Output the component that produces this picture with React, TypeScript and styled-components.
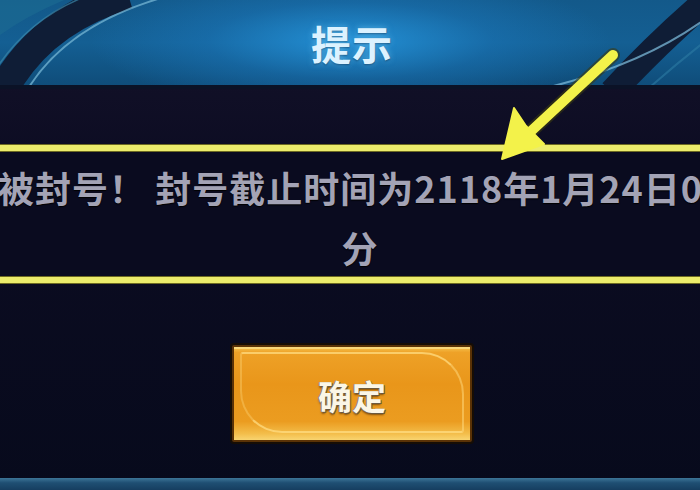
import React from "react";
import styled, { createGlobalStyle } from "styled-components";

const GlobalStyle = createGlobalStyle`
    html, body {
        margin: 0;
        padding: 0;
        background: #090a1d;
        overflow: hidden;
    }
`;

const Screen = styled.div`
    position: relative;
    width: 700px;
    height: 490px;
    display: flex;
    flex-direction: column;
    overflow: hidden;
    font-family: "Noto Sans CJK SC", "Noto Sans", sans-serif;
    background: linear-gradient(180deg, #15132b 0%, #0c0c22 35%, #070a1c 100%);
`;

const TitleBar = styled.header`
    position: relative;
    height: 85px;
    flex-shrink: 0;
    display: flex;
    align-items: center;
    justify-content: center;
    overflow: hidden;
    border-bottom: 4px solid #0b1226;
    background:
        radial-gradient(ellipse 260px 70px at 50% 48%, rgba(40, 160, 235, 0.75) 0%, rgba(30, 130, 205, 0.35) 55%, rgba(20, 90, 150, 0) 100%),
        linear-gradient(180deg, #13598a 0%, #145f93 50%, #0f4d7a 100%);
`;

const TitleArcs = styled.svg`
    position: absolute;
    inset: 0;
    pointer-events: none;
`;

const Title = styled.h1`
    position: relative;
    margin: 0 0 0 4px;
    font-size: 40px;
    font-weight: 700;
    letter-spacing: 1px;
    color: #dcf2ff;
    text-shadow: 0 0 6px rgba(120, 210, 255, 0.6), 0 1px 2px rgba(0, 40, 80, 0.8);
`;

const Notice = styled.section`
    margin-top: 56px;
    height: 120px;
    padding-top: 6px;
    box-sizing: content-box;
    border-top: 6px solid #ecec6c;
    border-bottom: 6px solid #ecec6c;
    box-shadow: 0 -1px 0 #6d6a22, 0 1px 0 #6d6a22, inset 0 1px 0 #6d6a22, inset 0 -1px 0 #6d6a22;
    background: #0a0b1f;
`;

const NoticeLine = styled.p<{ $centered?: boolean }>`
    margin: 0;
    height: 60px;
    line-height: 60px;
    white-space: nowrap;
    font-size: 36px;
    font-weight: 700;
    letter-spacing: 1px;
    color: #a3a3b5;
    text-shadow: 0 1px 1px #000;
    text-align: ${(p) => (p.$centered ? "center" : "left")};
    padding-left: ${(p) => (p.$centered ? "20px" : "0")};
    margin-left: ${(p) => (p.$centered ? "0" : "-2px")};
`;

const Actions = styled.div`
    display: flex;
    justify-content: center;
    padding-left: 4px;
    margin-top: 62px;
`;

const ConfirmButton = styled.button`
    position: relative;
    width: 240px;
    height: 97px;
    border: 2px solid #5a3206;
    border-radius: 2px;
    padding: 0;
    cursor: pointer;
    font-family: inherit;
    font-size: 34px;
    font-weight: 700;
    color: #fbf6e6;
    text-shadow: 1px 1px 0 #6b5a40, -1px 0 0 #8a7a60, 0 2px 2px rgba(60, 30, 0, 0.6);
    background:
        linear-gradient(180deg, #f6c24e 0%, #eea127 6%, #e9961a 40%, #eb9c20 80%, #f3bd4a 93%, #f8d470 100%);
    box-shadow: 0 0 0 2px #160d05, inset 0 2px 0 #f9d77a;

    &::before {
        content: "";
        position: absolute;
        inset: 5px 6px 7px 6px;
        border: 2px solid rgba(255, 220, 130, 0.75);
        border-radius: 3px 42px 3px 42px;
        border-left-color: rgba(255, 220, 130, 0.35);
        border-right-color: rgba(255, 220, 130, 0.5);
        pointer-events: none;
    }

    span {
        position: relative;
        top: 2px;
    }
`;

const BottomStrip = styled.div`
    margin-top: auto;
    height: 12px;
    background: linear-gradient(180deg, #3d7597 0%, #1f4f73 40%, #163e60 100%);
`;

const Pointer = styled.svg`
    position: absolute;
    left: 0;
    top: 0;
    width: 700px;
    height: 490px;
    pointer-events: none;
`;

const App: React.FC = () => {
    return (
        <>
            <GlobalStyle />
            <Screen>
                <TitleBar>
                    <TitleArcs width="700" height="85" viewBox="0 0 700 85">
                        {/* left sweep */}
                        <path d="M-30 60 Q 20 10 120 -20 L 0 -20 Z" fill="#1b6a92" opacity="0.7" />
                        <path d="M2 92 Q 40 20 128 -6" stroke="#0f1d36" strokeWidth="30" fill="none" />
                        <path d="M-14 86 Q 24 14 104 -10" stroke="#3a86a8" strokeWidth="1.5" fill="none" opacity="0.7" />
                        <path d="M26 92 Q 66 24 168 -4" stroke="#6fb0d0" strokeWidth="2" fill="none" opacity="0.8" />
                        {/* right sweep */}
                        <path d="M612 92 Q 660 40 712 -4" stroke="#0f1d36" strokeWidth="26" fill="none" />
                        <path d="M545 88 Q 640 66 704 20" stroke="#7bb8d8" strokeWidth="2" fill="none" opacity="0.75" />
                        <path d="M640 96 Q 680 60 720 30" stroke="#2d7ba3" strokeWidth="2" fill="none" opacity="0.6" />
                    </TitleArcs>
                    <Title>提示</Title>
                </TitleBar>

                <Notice>
                    <NoticeLine>被封号！ 封号截止时间为2118年1月24日0</NoticeLine>
                    <NoticeLine $centered>分</NoticeLine>
                </Notice>

                <Actions>
                    <ConfirmButton>
                        <span>确定</span>
                    </ConfirmButton>
                </Actions>

                <BottomStrip />

                <Pointer viewBox="0 0 700 490">
                    <line x1="613" y1="55" x2="530" y2="132" stroke="#3a3a10" strokeOpacity="0.6" strokeWidth="14" strokeLinecap="round" />
                    <line x1="613" y1="55" x2="528" y2="134" stroke="#f3f24a" strokeWidth="10" strokeLinecap="round" />
                    <path d="M502 159 L514 108 L526 126 L544 144 Z" fill="#f3f24a" stroke="#f3f24a" strokeWidth="2" strokeLinejoin="round" />
                </Pointer>
            </Screen>
        </>
    );
};

export default App;
